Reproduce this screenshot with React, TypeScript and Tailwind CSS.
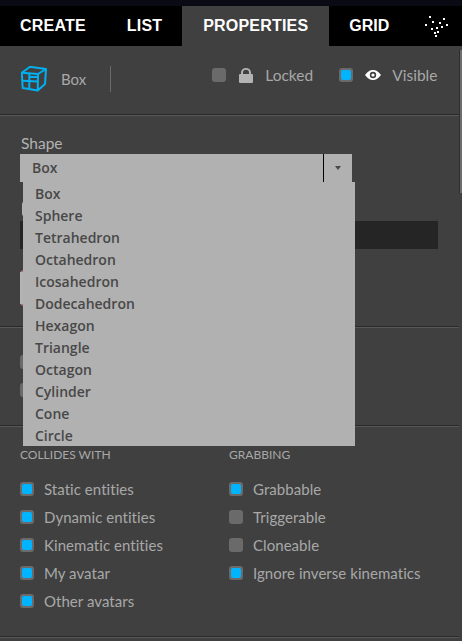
import React from "react";

function Check({ on = false }: { on?: boolean }) {
  return (
    <span className="flex h-[14px] w-[14px] shrink-0 items-center justify-center rounded-[3px] bg-[#6a6a6a]">
      {on && <span className="h-[10px] w-[10px] rounded-[2px] bg-[#00b4ff]" />}
    </span>
  );
}

function Row({ on, label }: { on?: boolean; label: string }) {
  return (
    <div className="flex h-[28px] items-center">
      <Check on={on} />
      <span className="ml-[10px] text-[15px] tracking-[0.05px] text-[#a8a8a8]">{label}</span>
    </div>
  );
}

function Sep() {
  return <div className="h-[2px] border-t border-b border-t-[#2a2a2a] border-b-[#575757]" />;
}

function Logo() {
  const pts = [[20, 17], [34, 19], [16, 25], [23, 22], [30, 23], [37, 25], [22, 29], [27, 28], [32, 27], [28, 32], [25, 33], [26, 36]];
  return (
    <svg width="52" height="40" viewBox="0 6 52 40" className="block">
      {pts.map(([x, y], i) => (
        <rect key={i} x={x - 1} y={y - 1} width="2" height="2" fill="#fff" />
      ))}
    </svg>
  );
}

const options = ["Box", "Sphere", "Tetrahedron", "Octahedron", "Icosahedron", "Dodecahedron", "Hexagon", "Triangle", "Octagon", "Cylinder", "Cone", "Circle"];

export default function App() {
  return (
    <div className="relative h-[641px] w-[462px] overflow-hidden bg-[#404040] [font-family:Lato,'Open_Sans',sans-serif]">
      <div className="h-[6px] bg-[#0a0a14]" />
      <nav className="flex h-[40px] items-center bg-black text-[16px] font-bold tracking-[0.2px] text-white [font-family:'Liberation_Sans',sans-serif]">
        <span className="shrink-0 pl-[20px] pr-[20px]">CREATE</span>
        <span className="shrink-0 pl-[21px] pr-[20px]">LIST</span>
        <span className="flex h-full w-[147px] shrink-0 items-center justify-center bg-[#404040]">PROPERTIES</span>
        <span className="w-[81px] shrink-0 pl-[20px] tracking-normal">GRID</span>
        <span className="shrink-0"><Logo /></span>
      </nav>
      <div className="flex">
        <main className="w-[459px]">
          <header className="flex h-[68px] pl-[21px]">
            <div className="flex h-[66px] items-center self-start">
              <svg width="26" height="26" viewBox="0 0 26 26" fill="none" stroke="#00b0f0" strokeWidth="2" strokeLinejoin="round">
                <path d="M0.800 6.700 L9 0.800 L25 3 L17 8 Z" />
                <path d="M0.800 6.700 L1.700 22 L16.700 24.500 L17 8 M25 3 L24 18 L16.700 24.500" />
                <path d="M1.200 14.700 L16.800 15.500 M8.300 7.500 L8.300 23.200 M8.300 11 L16.800 11" />
              </svg>
              <span className="ml-[14px] text-[15px] text-[#a8a8a8]">Box</span>
              <span className="ml-[24px] h-[26px] w-px bg-[#6a6a6a]" />
            </div>
            <div className="ml-[101px] flex h-[58px] items-center">
              <Check />
              <svg className="ml-[13px]" width="14" height="15" viewBox="0 0 14 15" fill="#b3b3b3">
                <path d="M2 6V4.500a5 4.500 0 0 1 10 0V6h1a1 1 0 0 1 1 1v7a1 1 0 0 1-1 1H1a1 1 0 0 1-1-1V7a1 1 0 0 1 1-1zM4 6h6V4.500a3 2.700 0 0 0-6 0z" />
              </svg>
              <span className="ml-[12px] w-[74px] pt-[1px] text-[15.500px] text-[#a8a8a8]">Locked</span>
              <Check on />
              <svg className="ml-[12px]" width="16" height="10" viewBox="0 0 16 10">
                <path d="M0 5C3 1 5.500 0 8 0s5 1 8 5c-3 4-5.500 5-8 5s-5-1-8-5z" fill="#ffffff" />
                <circle cx="8" cy="5" r="3.200" fill="#404040" />
                <circle cx="8" cy="5" r="1.600" fill="#ffffff" />
              </svg>
              <span className="ml-[11px] pt-[1px] text-[15.500px] text-[#a8a8a8]">Visible</span>
            </div>
          </header>
          <Sep />
          <section className="h-[210px] pl-[20px] pt-[18px]">
            <div className="h-[19px] pl-px text-[15.500px] leading-[19px] text-[#b3b3b3]">Shape</div>
            <div className="h-[28px]" />
            <div className="mt-[21px] flex h-[19px]"><span className="ml-[2px] h-[14px] w-[2px] rounded-l bg-[#b3b3b3]" /></div>
            <div className="h-[28px] w-[418px] bg-[#252525]" />
            <div className="mt-[21px] flex h-[36px] w-[10px] items-center rounded-l-[4px] bg-[#a87070]">
              <span className="h-[32px] w-full bg-[#b3b3b3]" />
            </div>
          </section>
          <Sep />
          <section className="h-[97px] pl-[20px] pt-[20px]">
            <div className="flex h-[28px] items-center"><Check /></div>
            <div className="flex h-[28px] items-center"><Check /></div>
          </section>
          <Sep />
          <section className="flex h-[209px] pl-[20px] pt-[20px]">
            <div className="w-[209px]">
              <div className="mb-[12px] h-[16px] text-[12px] leading-[16px] text-[#a8a8a8]">COLLIDES WITH</div>
              <Row on label="Static entities" />
              <Row on label="Dynamic entities" />
              <Row on label="Kinematic entities" />
              <Row on label="My avatar" />
              <Row on label="Other avatars" />
            </div>
            <div>
              <div className="mb-[12px] h-[16px] text-[12px] leading-[16px] text-[#a8a8a8]">GRABBING</div>
              <Row on label="Grabbable" />
              <Row label="Triggerable" />
              <Row label="Cloneable" />
              <Row on label="Ignore inverse kinematics" />
            </div>
          </section>
          <Sep />
        </main>
        <div className="flex h-[147px] w-[3px] pt-[4px]">
          <span className="w-px bg-[#2e2e2e]" />
          <span className="w-[2px] bg-[#6e6e6e]" />
        </div>
      </div>

      <div className="absolute left-[20px] top-[154px] flex h-[28px] w-[332px] items-stretch bg-[#b1b1b1] text-[14px] font-semibold text-[#484848] [font-family:'Open_Sans',sans-serif]">
        <span className="flex-1 pl-[12px] leading-[28px]">Box</span>
        <span className="flex w-[29px] items-center justify-center border-l border-black">
          <span className="h-0 w-0 border-x-[3.500px] border-t-[4px] border-x-transparent border-t-[#484848]" />
        </span>
      </div>
      <ul className="absolute left-[23px] top-[182px] h-[264px] w-[332px] bg-[#b1b1b1] pl-[12px] pt-[1px] text-[14px] font-semibold text-[#484848] [font-family:'Open_Sans',sans-serif]">
        {options.map((o) => (
          <li key={o} className="h-[22px] leading-[22px]">{o}</li>
        ))}
      </ul>
    </div>
  );
}
